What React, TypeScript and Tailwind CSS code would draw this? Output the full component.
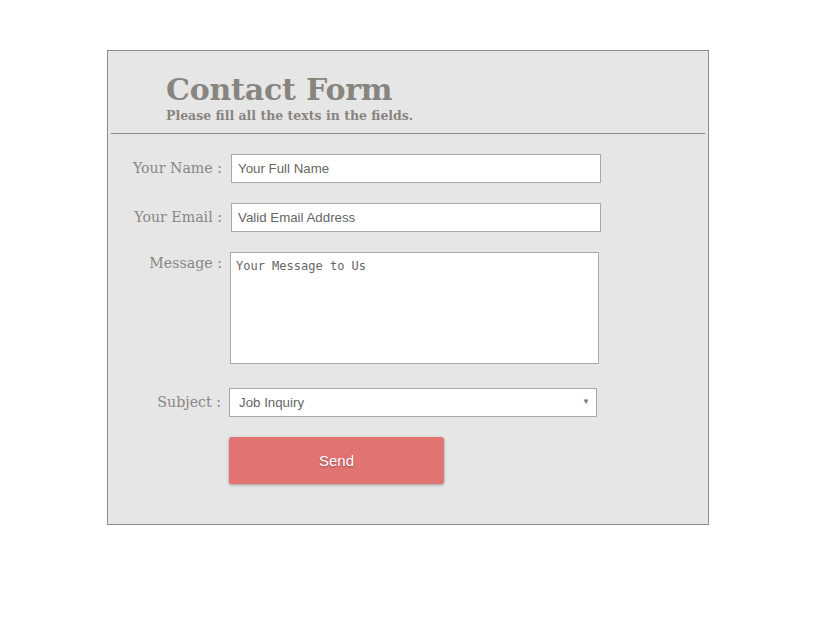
import React from "react";

const serif = { fontFamily: '"DejaVu Serif", "Liberation Serif", serif' };
const sans = { fontFamily: '"Liberation Sans", Arial, sans-serif' };

export default function App() {
  return (
    <div className="min-h-[637px] w-full bg-white pt-[50px] pl-[107px]">
      <div className="w-[602px] h-[475px] border border-[#8c8c8c] bg-[#e6e6e6] px-[3px]">
        <div className="pl-[55px] pt-[20px] h-[82px]" style={serif}>
          <h1 className="text-[30px] leading-[37px] font-bold text-[#888480] tracking-[-0.2px]">Contact Form</h1>
          <p className="text-[12.5px] leading-[14px] font-bold text-[#888480] mt-[1px]">Please fill all the texts in the fields.</p>
        </div>
        <div className="h-px bg-[#8c8c8c]" />
        <div className="pt-[20px]">
          <div className="flex items-center h-[29px]">
            <label className="w-[114px] text-right text-[14.2px] text-[#8a8684] pr-[3px]" style={serif}>Your Name :</label>
            <input className="ml-[6px] w-[370px] h-[29px] border border-[#a9a9a9] bg-white px-[6px] text-[13.3px] text-[#666] outline-none" style={sans} defaultValue="Your Full Name" />
          </div>
          <div className="flex items-center h-[29px] mt-[20px]">
            <label className="w-[114px] text-right text-[14.2px] text-[#8a8684] pr-[3px]" style={serif}>Your Email :</label>
            <input className="ml-[6px] w-[370px] h-[29px] border border-[#a9a9a9] bg-white px-[6px] text-[13.3px] text-[#666] outline-none" style={sans} defaultValue="Valid Email Address" />
          </div>
          <div className="flex items-start mt-[20px]">
            <label className="w-[114px] text-right text-[14.2px] text-[#8a8684] pr-[3px] pt-[1px]" style={serif}>Message :</label>
            <textarea className="ml-[5px] w-[369px] h-[112px] border border-[#a9a9a9] bg-white pl-[5px] pr-[5px] pt-[6px] text-[12px] leading-[15px] text-[#666] outline-none resize-none" style={{ fontFamily: '"DejaVu Sans Mono", "Liberation Mono", monospace' }} defaultValue="Your Message to Us" />
          </div>
          <div className="flex items-center h-[29px] mt-[24px]">
            <label className="w-[114px] text-right text-[14.2px] text-[#8a8684] pr-[4px]" style={serif}>Subject :</label>
            <div className="relative ml-[4px] w-[368px] h-[29px] border border-[#a9a9a9] bg-white flex items-center px-[9px] text-[13.3px] text-[#666]" style={sans}>
              Job Inquiry
              <span className="absolute right-[6px] top-[9px] text-[8px] text-[#777] leading-none">▼</span>
            </div>
          </div>
          <div className="pl-[118px] mt-[20px]">
            <button className="w-[215px] h-[47px] pt-[2px] rounded-[3px] bg-[#e27373] text-white text-[15px] shadow-[0_1px_3px_rgba(0,0,0,0.35)] [text-shadow:0_1px_2px_rgba(0,0,0,0.35)]" style={sans}>Send</button>
          </div>
        </div>
      </div>
    </div>
  );
}
